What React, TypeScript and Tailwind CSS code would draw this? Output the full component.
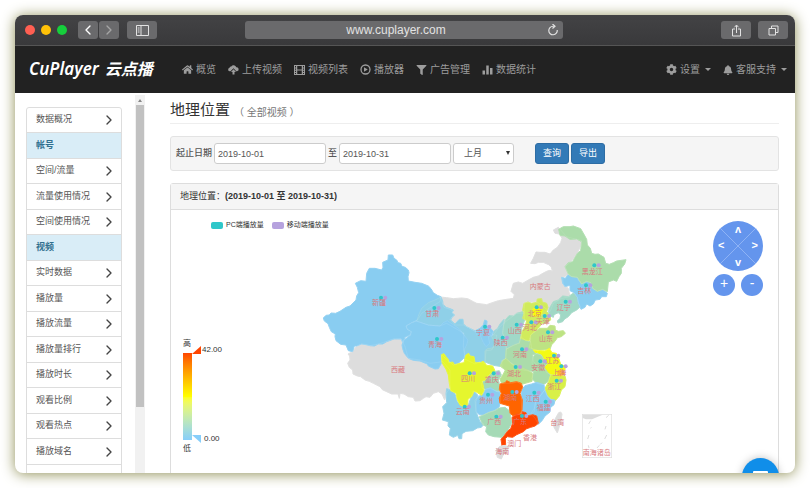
import { useState } from "react";
import type { ReactNode } from "react";
import { ChevronLeft, ChevronRight } from "lucide-react";
import { FaHome, FaFilter, FaBell, FaCog } from "react-icons/fa";

interface Region {
  name: string;
  fill: string;
  d: string;
}

interface RegionLabel {
  name: string;
  x: number;
  y: number;
  dot?: [number, number];
}

const NO_DATA = "#dddddd";

const regions: Region[] = [
  { name: "内蒙古", fill: NO_DATA, d: "M360 231L380 233 400 236 425 234 443 236 460 245 470 250 500 254 520 247 535 242 560 238 580 235 583 224 573 214 580 190 595 186 608 190 625 180 640 172 655 168 670 159 682 153 690 151 697 153 694 141 686 134 670 127 655 127 645 131 632 130 640 115 648 96 660 97 675 97 690 102 700 90 712 82 722 68 726 55 718 42 705 40 700 30 715 22 740 50 785 62 783 75 772 100 758 120 735 140 745 165 728 172 730 195 745 205 750 230 725 235 700 250 690 275 670 260 650 245 614 248 612 280 590 280 570 295 550 310 535 325 520 345 505 330 480 330 465 335 450 325 430 315 405 315 390 298 403 285 395 270 372 262Z" },
  { name: "西藏", fill: NO_DATA, d: "M98 395L108 380 125 372 150 377 175 372 200 364 220 357 243 356 255 380 265 415 300 420 330 430 368 425 390 450 390 505 380 518 374 540 366 522 355 515 340 520 330 532 318 530 310 535 300 542 285 543 280 532 265 530 252 522 240 520 238 535 234 522 215 522 200 515 187 509 180 500 160 490 148 484 135 480 122 470 112 468 99 462 98 450 88 442 83 430 90 420 89 408 84 402Z" },
  { name: "新疆", fill: "#89cdf1", d: "M205 105L218 105 222 115 230 120 234 128 242 130 246 139 256 142 265 150 267 158 264 170 265 183 285 187 305 190 325 198 333 206 340 218 352 226 363 230 360 245 335 260 305 280 292 300 275 308 258 318 262 328 274 335 270 345 255 352 248 368 244 357 222 357 200 365 188 372 175 372 163 378 150 377 138 374 125 372 110 378 103 378 98 395 85 392 78 375 62 373 48 362 45 350 46 342 34 335 28 322 24 311 13 303 10 294 18 286 28 285 33 279 47 280 60 274 78 262 90 258 108 240 110 228 116 218 112 202 106 190 122 182 138 184 140 160 148 145 165 145 185 150 189 142 188 127 204 120Z" },
  { name: "甘肃", fill: "#8fd0e8", d: "M363 231L368 243 369 253 378 262 390 266 400 270 396 278 404 285 396 292 392 300 405 312 418 298 429 298 430 312 440 320 452 326 470 335 485 345 492 345 500 345 515 345 530 345 525 375 515 390 498 392 495 430 478 425 465 432 430 415 435 405 430 380 432 340 380 310 360 318 325 315 290 304 296 285 305 265 325 248 345 240Z" },
  { name: "青海", fill: "#89cdf1", d: "M258 318L275 308 290 303 305 308 325 315 345 317 360 318 370 308 382 302 400 314 418 326 432 345 444 360 440 375 432 390 434 412 415 430 400 435 365 405 365 428 355 446 345 447 325 438 322 432 300 423 280 421 265 415 253 400 248 386 246 375 252 360 272 345 274 335 262 328Z" },
  { name: "陕西", fill: "#99d4d8", d: "M552 298L550 320 548 340 556 360 560 385 558 415 545 422 546 440 520 436 495 426 495 392 503 386 518 384 525 368 515 350 520 335 533 325 540 312Z" },
  { name: "宁夏", fill: "#89cdf1", d: "M494 300L501 303 500 318 512 325 520 335 516 348 505 350 509 370 498 380 490 368 480 345 470 345 466 332 480 325 490 315Z" },
  { name: "山西", fill: "#a0d8c8", d: "M612 274L614 300 605 325 605 345 598 368 572 380 558 388 556 360 548 340 550 320 556 300 567 287 580 288 590 280Z" },
  { name: "河南", fill: "#abdcab", d: "M602 350L618 362 632 365 635 385 655 392 650 402 637 405 640 425 655 440 650 455 620 452 600 448 575 430 556 415 558 388 580 376 598 370Z" },
  { name: "山东", fill: "#bde383", d: "M632 360L632 345 645 335 660 325 682 325 690 316 705 318 706 330 715 334 730 332 736 340 724 350 712 353 705 364 695 374 690 388 660 391 645 392 628 382Z" },
  { name: "河北", fill: "#d1eb5c", d: "M612 250L624 246 634 250 650 247 652 237 665 236 667 246 680 250 684 262 680 275 690 285 692 300 680 308 666 310 655 325 642 336 632 345 628 362 615 360 602 355 606 335 616 318 620 302 608 295 612 280 608 270Z" },
  { name: "北京", fill: "#f8fb08", d: "M638 268L648 261 658 260 667 270 664 284 655 290 641 289Z" },
  { name: "天津", fill: "#bfe57c", d: "M665 284L674 283 680 292 684 306 672 311 664 300Z" },
  { name: "辽宁", fill: "#a0d8c5", d: "M762 218L772 232 775 248 781 260 770 270 755 278 745 290 734 297 728 305 714 309 712 303 720 295 722 285 715 278 702 284 700 292 690 287 685 275 690 262 700 245 715 240 728 228 745 230Z" },
  { name: "吉林", fill: "#89cdf1", d: "M725 172L736 175 745 163 755 170 772 172 775 180 785 192 800 184 812 188 818 205 832 214 848 208 862 220 859 230 845 230 840 238 826 240 820 252 810 258 800 252 795 262 783 268 775 248 772 232 762 218 750 212 750 196 735 200 728 190Z" },
  { name: "黑龙江", fill: "#abdcaa", d: "M716 28L730 20 750 20 760 18 782 26 793 45 800 58 802 75 811 85 815 100 825 103 835 102 852 112 857 130 868 133 880 128 890 123 918 119 914 132 904 145 904 160 897 170 890 184 880 180 865 186 862 215 848 208 832 214 818 205 812 188 800 184 785 192 772 172 755 170 745 163 735 140 745 128 758 125 765 112 772 100 782 92 785 65 770 57 750 58 735 48 720 46Z" },
  { name: "江苏", fill: "#f3fb14", d: "M640 390L660 392 675 393 688 385 696 398 709 400 716 415 722 432 735 440 735 450 726 456 700 466 680 458 672 442 682 430 672 420 664 405 648 400Z" },
  { name: "安徽", fill: "#a9dca9", d: "M648 400L664 405 672 420 682 430 672 442 682 456 692 466 684 485 670 494 650 490 636 476 640 460 638 440 636 425 640 410Z" },
  { name: "浙江", fill: "#d8f048", d: "M692 464L710 466 735 468 738 480 735 500 724 510 718 528 706 542 690 536 680 525 675 505 686 485Z" },
  { name: "上海", fill: "#ffb320", d: "M714 452L728 450 734 462 722 468 712 464Z" },
  { name: "湖北", fill: "#b7e18e", d: "M548 422L558 415 575 432 600 442 622 450 638 460 636 484 605 493 592 486 575 490 545 490 540 478 550 462 556 450 540 438Z" },
  { name: "重庆", fill: "#a4dab6", d: "M484 490L496 480 508 464 520 455 538 452 544 465 535 480 540 500 540 514 525 512 510 505 496 508 486 504Z" },
  { name: "贵州", fill: "#89cdf1", d: "M465 540L478 528 490 520 496 508 512 503 530 515 540 516 542 540 538 560 526 570 505 577 490 585 478 584 468 575Z" },
  { name: "云南", fill: "#8fd0e8", d: "M378 522L380 506 392 510 405 522 412 545 432 562 445 555 452 535 460 512 474 526 468 545 468 575 474 590 480 605 492 612 484 622 472 624 458 632 438 634 426 641 425 656 417 656 413 646 400 652 388 645 391 625 384 618 385 605 367 600 372 580 368 560 380 548Z" },
  { name: "四川", fill: "#e5f62e", d: "M364 404L372 401 378 410 385 418 387 428 398 426 404 434 420 430 432 428 437 406 446 400 450 408 462 410 465 428 480 428 490 424 500 436 518 438 525 452 508 464 496 480 486 484 490 498 492 512 485 526 470 517 462 514 455 530 444 537 443 555 431 560 420 555 412 540 408 520 392 512 388 490 385 465 378 448 366 428Z" },
  { name: "广西", fill: "#a5dab6", d: "M478 590L490 585 508 577 524 572 538 564 555 562 568 572 572 590 575 610 565 628 555 642 546 652 522 650 505 645 497 635 500 620 488 614Z" },
  { name: "江西", fill: "#89cdf1", d: "M605 510L615 497 635 492 650 487 672 494 674 510 658 532 646 548 643 575 630 585 606 583 604 545Z" },
  { name: "福建", fill: "#89cdf1", d: "M674 510L682 528 692 538 705 540 702 554 692 562 690 576 675 588 666 602 655 613 645 594 632 582 643 565 647 545Z" },
  { name: "湖南", fill: "#ff6400", d: "M540 492L556 488 560 482 572 488 590 485 604 490 608 502 600 520 607 540 606 570 600 582 580 588 570 580 568 558 540 550 538 535 544 520 538 508Z" },
  { name: "广东", fill: "#ff4500", d: "M576 592L590 582 605 584 606 575 618 578 620 588 638 584 650 588 655 610 645 618 632 622 620 626 610 635 590 644 578 652 562 650 556 656 557 674 546 678 543 658 552 648 562 634 572 626 578 610Z" },
  { name: "海南", fill: NO_DATA, d: "M528 690L538 680 552 676 566 680 562 694 550 704 544 717 532 712Z" },
  { name: "台湾", fill: NO_DATA, d: "M716 578L722 576 726 582 722 606 712 639 702 622 700 608 708 592Z" },
];

const labels: RegionLabel[] = [
  { name: "内蒙古", x: 661, y: 199 },
  { name: "西藏", x: 234, y: 448 },
  { name: "新疆", x: 177, y: 248, dot: [183, 233] },
  { name: "甘肃", x: 337, y: 279, dot: [343, 264] },
  { name: "青海", x: 345, y: 374, dot: [351, 357] },
  { name: "宁夏", x: 489, y: 338, dot: [495, 320] },
  { name: "陕西", x: 542, y: 368, dot: [548, 353] },
  { name: "山西", x: 584, y: 330, dot: [590, 314] },
  { name: "河北", x: 629, y: 323, dot: [634, 307] },
  { name: "北京", x: 644, y: 279, dot: [650, 262] },
  { name: "天津", x: 668, y: 303, dot: [674, 288] },
  { name: "辽宁", x: 731, y: 261, dot: [737, 245] },
  { name: "吉林", x: 793, y: 212, dot: [798, 196] },
  { name: "黑龙江", x: 817, y: 153, dot: [823, 136] },
  { name: "山东", x: 678, y: 354, dot: [684, 337] },
  { name: "河南", x: 600, y: 404, dot: [606, 388] },
  { name: "江苏", x: 697, y: 422, dot: [702, 407] },
  { name: "安徽", x: 655, y: 441, dot: [661, 424] },
  { name: "上海", x: 718, y: 456, dot: [724, 439] },
  { name: "浙江", x: 703, y: 500, dot: [710, 482] },
  { name: "湖北", x: 582, y: 459, dot: [587, 441] },
  { name: "重庆", x: 515, y: 477, dot: [521, 460] },
  { name: "四川", x: 444, y: 476, dot: [449, 460] },
  { name: "贵州", x: 498, y: 541, dot: [504, 524] },
  { name: "云南", x: 428, y: 575, dot: [434, 560] },
  { name: "湖南", x: 571, y: 533, dot: [577, 516] },
  { name: "江西", x: 638, y: 534, dot: [643, 518] },
  { name: "福建", x: 671, y: 561, dot: [677, 545] },
  { name: "广西", x: 523, y: 605, dot: [529, 590] },
  { name: "广东", x: 600, y: 605, dot: [606, 588] },
  { name: "香港", x: 630, y: 651 },
  { name: "澳门", x: 583, y: 669 },
  { name: "海南", x: 547, y: 695 },
  { name: "台湾", x: 712, y: 608 },
  { name: "南海诸岛", x: 830, y: 698 },
];

const sideItems = [
  { label: "数据概况" },
  { label: "帐号", heading: true },
  { label: "空间/流量" },
  { label: "流量使用情况" },
  { label: "空间使用情况" },
  { label: "视频", heading: true },
  { label: "实时数据" },
  { label: "播放量" },
  { label: "播放流量" },
  { label: "播放量排行" },
  { label: "播放时长" },
  { label: "观看比例" },
  { label: "观看热点" },
  { label: "播放域名" },
];

function CloudUploadIcon() {
  return (
    <svg viewBox="0 0 22 22" className="size-[11px]" fill="currentColor">
      <path d="M5 14.500H3.500A3.500 3.500 0 0 1 3 7.600 3.500 3.500 0 0 1 6.500 5 5.500 5.500 0 0 1 16.500 6.500 4 4 0 0 1 18 14.500h-1.500L11 8.500z" />
      <path d="M11 10.500l5 5.500h-3v5H9v-5H6z" />
    </svg>
  );
}

function FilmIcon() {
  return (
    <svg viewBox="0 0 22 20" className="h-[10px] w-[11px]" fill="currentColor" fillRule="evenodd">
      <path d="M0 0h22v20H0zM2 2v3h2V2zM2 7v2.500h2V7zM2 11.500v2.500h2v-2.500zM2 16v2h2v-2zM6.500 2v7h9V2zM6.500 11v7h9v-7zM18 2v3h2V2zM18 7v2.500h2V7zM18 11.500v2.500h2v-2.500zM18 16v2h2v-2z" />
    </svg>
  );
}

function PlayIcon() {
  return (
    <svg viewBox="0 0 22 22" className="size-[11px]">
      <circle cx="11" cy="11" r="9" fill="none" stroke="currentColor" strokeWidth="2.600" />
      <path d="M8 6.500v9l7.500-4.500z" fill="currentColor" />
    </svg>
  );
}

function StatsIcon() {
  return (
    <svg viewBox="0 0 22 20" className="h-[10px] w-[11px]" fill="currentColor">
      <path d="M1 11h5v8H1zM8.500 1h5v18h-5zM16 6h5v13h-5z" />
    </svg>
  );
}

const navItems: { label: string; icon: ReactNode }[] = [
  { label: "概览", icon: <FaHome className="size-[11px]" /> },
  { label: "上传视频", icon: <CloudUploadIcon /> },
  { label: "视频列表", icon: <FilmIcon /> },
  { label: "播放器", icon: <PlayIcon /> },
  { label: "广告管理", icon: <FaFilter className="h-[10px] w-[11px]" /> },
  { label: "数据统计", icon: <StatsIcon /> },
];

function Caret() {
  return <span className="ml-0.5 border-x-[3px] border-t-[3px] border-x-transparent border-t-current" />;
}

function TitleBar() {
  return (
    <div className="flex h-[31px] shrink-0 items-center border-b border-[#555] bg-linear-to-b from-[#434345] to-[#39393b] pr-[7px] pl-[10px] text-[#e2e2e2]">
      <div className="flex gap-[6px]">
        <span className="size-[10px] rounded-full bg-[#ff5f52]" />
        <span className="size-[10px] rounded-full bg-[#ffc107]" />
        <span className="size-[10px] rounded-full bg-[#16cf3c]" />
      </div>
      <div className="ml-[11px] flex gap-px">
        <button aria-label="后退" className="flex h-[18px] w-5 items-center justify-center rounded-[3px] bg-[#6a6a6c]">
          <ChevronLeft className="size-4 text-white" strokeWidth={2} />
        </button>
        <button aria-label="前进" className="flex h-[18px] w-5 items-center justify-center rounded-[3px] bg-[#6a6a6c]">
          <ChevronRight className="size-4 text-[#a5a5a5]" strokeWidth={2} />
        </button>
      </div>
      <button aria-label="边栏" className="ml-2 flex h-[18px] w-[30px] items-center justify-center rounded-[3px] bg-[#6a6a6c]">
        <svg viewBox="0 0 26 22" className="h-[11px] w-[13px]" fill="none" stroke="currentColor" strokeWidth="2">
          <path d="M1 1h24v20H1zM10 1v20M3.500 6H7M3.500 10H7M3.500 14H7" />
        </svg>
      </button>
      <div className="mr-[158px] ml-[88px] flex h-[18px] flex-1 items-center rounded-[3px] bg-[#6a6a6c]">
        <input
          aria-label="网址"
          defaultValue="www.cuplayer.com"
          className="h-full w-0 flex-1 text-center text-[12px] leading-[18px] outline-none"
        />
        <button aria-label="刷新" className="mr-1 flex size-3 items-center justify-center">
          <svg viewBox="0 0 24 24" className="size-3" fill="none" stroke="currentColor" strokeWidth="2.400">
            <path d="M20.500 12A8.500 8.500 0 1 1 12 4.500h3" />
            <path d="M11 0l5 4.500-5 4.500" />
          </svg>
        </button>
      </div>
      <div className="flex gap-[7px]">
        <button aria-label="分享" className="flex h-[18px] w-[30px] items-center justify-center rounded-[3px] bg-[#6a6a6c]">
          <svg viewBox="0 0 22 26" className="h-[13px] w-[11px]" fill="none" stroke="currentColor" strokeWidth="2">
            <path d="M8 10H3v14h16V10h-5M11 18V3M7 6.500L11 2l4 4.500" />
          </svg>
        </button>
        <button aria-label="标签页" className="flex h-[18px] w-[30px] items-center justify-center rounded-[3px] bg-[#6a6a6c]">
          <svg viewBox="0 0 22 22" className="size-[11px]" fill="none" stroke="currentColor" strokeWidth="2">
            <path d="M2 7h13v13H2zM7 7V2h13v13h-5" />
          </svg>
        </button>
      </div>
    </div>
  );
}

function NavBar() {
  return (
    <header className="flex h-[47px] shrink-0 items-center bg-[#222] pr-2 pl-[14px] text-[10px] text-[#9d9d9d]">
      <a href="#" className="flex w-[153px] items-baseline gap-[6px] whitespace-nowrap italic text-white">
        <span className="font-['Noto_Sans'] text-[17px] leading-6 font-semibold">CuPlayer</span>
        <span className="text-[16px] leading-6 font-bold">云点播</span>
      </a>
      <nav className="flex gap-3">
        {navItems.map((item) => (
          <a key={item.label} href="#" className="flex items-center gap-[3px] whitespace-nowrap">
            {item.icon}
            {item.label}
          </a>
        ))}
      </nav>
      <div className="ml-auto flex gap-3 whitespace-nowrap">
        <button className="flex items-center gap-[3px]">
          <FaCog className="size-[11px]" />
          设置
          <Caret />
        </button>
        <button className="flex items-center gap-[3px]">
          <FaBell className="size-[10px]" />
          客服支持
          <Caret />
        </button>
      </div>
    </header>
  );
}

function Sidebar() {
  return (
    <aside className="flex shrink-0 gap-[13px] pl-[11px]">
      <ul className="mt-[14px] w-24 self-start rounded-t-[3px] border border-[#ddd] pb-6">
        {sideItems.map((item) => (
          <li key={item.label} className="h-[25px] border-b border-[#ddd] even:h-[26px]">
            {item.heading ? (
              <h2 className="flex h-full items-center bg-[#d9edf7] pl-[9px] text-[9px] font-bold text-[#31708f]">
                {item.label}
              </h2>
            ) : (
              <a href="#" className="flex h-full items-center justify-between pr-1 pl-[9px] text-[9px] text-[#555]">
                {item.label}
                <ChevronRight className="size-4 text-[#444]" strokeWidth={2} />
              </a>
            )}
          </li>
        ))}
      </ul>
      {/* scroll track */}
      <div className="mt-0.5 flex w-[10px] flex-col items-center bg-[#f1f1f1]">
        <div className="flex h-[10px] items-center">
          <span className="border-x-[2px] border-b-[3px] border-x-transparent border-b-[#888]" />
        </div>
        <div className="h-4/5 w-2 bg-[#c1c1c1]" />
      </div>
    </aside>
  );
}

function FilterBar() {
  const [from, setFrom] = useState("2019-10-01");
  const [to, setTo] = useState("2019-10-31");
  const field = "h-[21px] w-28 rounded-[3px] border border-[#ccc] bg-white px-[3px] text-[9px] text-[#555]";

  return (
    <form className="mt-3 flex h-[35px] items-center gap-0.5 rounded-[3px] border border-[#e3e3e3] bg-[#f5f5f5] pl-[5px] text-[9px] text-[#333]">
      <label htmlFor="from" className="font-medium text-[#555]">起止日期</label>
      <input id="from" value={from} onChange={(e) => setFrom(e.target.value)} className={field} />
      <label htmlFor="to">至</label>
      <input id="to" value={to} onChange={(e) => setTo(e.target.value)} className={field} />
      <div className="relative">
        <select aria-label="时间范围" className="h-[21px] w-[61px] appearance-none rounded-[3px] border border-[#ccc] bg-white pl-[10px] text-[9px] text-[#555]">
          <option>上月</option>
          <option>本月</option>
        </select>
        <span className="pointer-events-none absolute top-2 right-1 border-x-[2px] border-t-[4px] border-x-transparent border-t-[#333]" />
      </div>
      <button type="button" className="ml-[19px] h-[21px] w-[34px] rounded-[3px] border border-[#2e6da4] bg-[#337ab7] text-white">查询</button>
      <button type="button" className="h-[21px] w-[34px] rounded-[3px] border border-[#2e6da4] bg-[#337ab7] text-white">导出</button>
    </form>
  );
}

function ChinaMap() {
  return (
    <svg viewBox="0 0 930 750" className="h-[250px] w-[310px] shrink-0">
      {/* same-colour stroke closes the seams between neighbours */}
      <g strokeWidth="3" strokeLinejoin="round">
        {regions.map((r) => (
          <path key={r.name} d={r.d} fill={r.fill} stroke={r.fill} />
        ))}
      </g>
      <g fill="none" stroke="#fff" strokeOpacity="0.15" strokeWidth="2" strokeLinejoin="round">
        {regions.map((r) => (
          <path key={r.name} d={r.d} />
        ))}
      </g>

      {/* South China Sea inset */}
      <rect x="787" y="583" width="88" height="130" fill="none" stroke="#ddd" strokeWidth="2" />
      <path d="M788 584h60l-18 8-14 6h-18l-10-4z" fill={NO_DATA} />
      <path
        d="M866 586l-8 7M812 602l-6 10M858 618l-3 10M860 645l-6 12M807 645l-4 12M812 625l2-3M838 676l-7 8M805 676l2 8M846 668l-5 5"
        stroke="#ccc"
        strokeWidth="2"
      />

      {labels.map((l) => (
        <g key={l.name}>
          {l.dot && <circle cx={l.dot[0]} cy={l.dot[1]} r="6" fill="#2ec7c9" />}
          {l.dot && <circle cx={l.dot[0] + 13} cy={l.dot[1]} r="6" fill="#b6a2de" />}
          <text x={l.x} y={l.y + 8} textAnchor="middle" fontSize="21" fill="#d87a80">
            {l.name}
          </text>
        </g>
      ))}
    </svg>
  );
}

function MapControls() {
  const round = "flex size-[22px] items-center justify-center rounded-full bg-[#6495ed] pb-1 text-[14px] leading-none";

  return (
    <div className="mr-[15px] ml-auto w-[50px] pt-px text-white">
      <div
        role="group"
        aria-label="移动地图"
        className="grid size-[50px] grid-cols-3 grid-rows-3 place-items-center rounded-full bg-[#6495ed] bg-[linear-gradient(45deg,transparent_49%,#8fb3f5_50%,transparent_51%),linear-gradient(135deg,transparent_49%,#8fb3f5_50%,transparent_51%)]"
      >
        <button aria-label="上" className="col-start-2 row-start-1 text-[11px] leading-none font-bold">ʌ</button>
        <button aria-label="左" className="col-start-1 row-start-2 text-[11px] leading-none font-bold">&lt;</button>
        <button aria-label="右" className="col-start-3 row-start-2 text-[11px] leading-none font-bold">&gt;</button>
        <button aria-label="下" className="col-start-2 row-start-3 text-[11px] leading-none font-bold">v</button>
      </div>
      <div className="mt-[3px] flex justify-between">
        <button aria-label="放大" className={round}>+</button>
        <button aria-label="缩小" className={round}>-</button>
      </div>
    </div>
  );
}

function MapPanel() {
  return (
    <section className="mt-3 rounded-t-[3px] border border-[#ddd]">
      <h2 className="flex h-[26px] items-center border-b border-[#ddd] bg-[#f5f5f5] pl-[9px] text-[9px] whitespace-pre text-[#333]">
        地理位置：<b>(2019-10-01 至 2019-10-31)</b>
      </h2>
      <div className="flex pt-[10px] pb-10 text-[#333]">
        <div className="w-[149px] shrink-0">
          <div className="ml-10 flex h-[10px] items-center gap-2 text-[7px] leading-[10px] whitespace-nowrap">
            <span className="flex items-center gap-[3px]">
              <span className="h-[7px] w-3 rounded-[2px] bg-[#2ec7c9]" />
              PC端播放量
            </span>
            <span className="flex items-center gap-[3px]">
              <span className="h-[7px] w-3 rounded-[2px] bg-[#b6a2de]" />
              移动端播放量
            </span>
          </div>

          {/* visual scale, high to low */}
          <div className="mt-[109px] ml-3 text-[8px] leading-[10px]">
            <div>高</div>
            <div className="flex h-[95px]">
              <div className="my-1 w-[9px] bg-linear-to-b from-[#ff4500] via-[#ffff00] to-[#87cefa]" />
              <div className="flex flex-col justify-between">
                <div className="-mt-1 flex items-center gap-px">
                  <svg viewBox="0 0 9 8" className="h-2 w-[9px]"><path d="M0 8L9 0v8z" fill="#ff4500" /></svg>
                  42.00
                </div>
                <div className="flex items-center gap-[3px]">
                  <svg viewBox="0 0 9 8" className="h-2 w-[9px]"><path d="M0 0h9v8z" fill="#87cefa" /></svg>
                  0.00
                </div>
              </div>
            </div>
            <div>低</div>
          </div>
        </div>
        <ChinaMap />
        <MapControls />
      </div>
    </section>
  );
}

export default function App() {
  return (
    <div className="h-screen bg-white p-[15px] font-['Liberation_Sans','Noto_Sans_CJK_SC',sans-serif]">
      <div className="relative flex h-full flex-col overflow-hidden rounded-lg bg-white shadow-[0_1px_14px_#8f8f55]">
        <TitleBar />
        <NavBar />
        <div className="flex min-h-0 flex-1 overflow-hidden">
          <Sidebar />
          <main className="ml-[25px] min-w-0 flex-1 pt-1 pr-4">
            <h1 className="flex h-[27px] items-center gap-1 border-b border-[#eee] text-[15px] text-[#333]">
              地理位置
              <small className="pt-1 text-[10px] text-[#777]">（ 全部视频 ）</small>
            </h1>
            <FilterBar />
            <MapPanel />
          </main>
        </div>
        <button
          aria-label="在线客服"
          className="absolute right-4 -bottom-[22px] flex size-[37px] justify-center rounded-full bg-[#108ee9] pt-[13px] shadow-[0_0_8px_#00000040]"
        >
          <span className="h-3 w-[15px] rounded-[1px] bg-white" />
        </button>
      </div>
    </div>
  );
}
